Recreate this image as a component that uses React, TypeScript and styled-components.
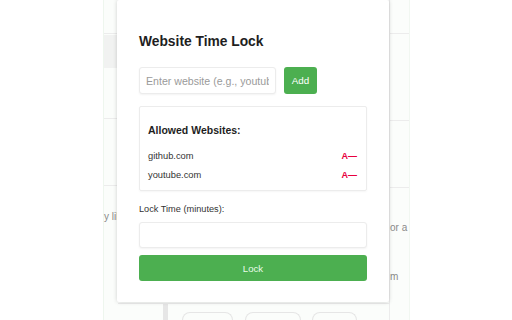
import React from "react";
import styled, { createGlobalStyle } from "styled-components";

const Global = createGlobalStyle`
  html, body { margin: 0; padding: 0; background: #ffffff; }
  body { font-family: "Liberation Sans", Arial, sans-serif; }
  * { box-sizing: border-box; }
`;

const Stage = styled.div`
  position: relative;
  width: 512px;
  height: 320px;
  overflow: hidden;
  display: flex;
  background: #ffffff;
`;

const Gutter = styled.div`
  width: 103px;
  flex: none;
`;

const BgPage = styled.div`
  width: 307px;
  flex: none;
  display: flex;
  background: #fbfdfb;
  border-left: 1px solid #eef6ee;
  border-right: 1px solid #f1f7f1;
`;

const SideStrip = styled.div<{ $w: number; $right?: boolean }>`
  width: ${(p) => p.$w}px;
  flex: none;
  display: flex;
  flex-direction: column;
  ${(p) => (p.$right ? "border-left: 1px solid #ececec;" : "")}
`;

const Segment = styled.div<{ $h: number; $line?: boolean }>`
  height: ${(p) => p.$h}px;
  flex: none;
  ${(p) => (p.$line ? "border-bottom: 1px solid #ececec;" : "")}
`;

const GrayBlock = styled.div`
  height: 33px;
  flex: none;
  background: #f1f2f1;
`;

const Fragment = styled.div<{ $h: number }>`
  height: ${(p) => p.$h}px;
  flex: none;
  display: flex;
  align-items: center;
  font-size: 10px;
  color: #8a8a8a;
  white-space: nowrap;
`;

const Middle = styled.div`
  flex: 1;
  display: flex;
  flex-direction: column;
`;

const BottomRow = styled.div`
  margin-top: 303px;
  height: 17px;
  border-top: 1px solid #ececec;
  display: flex;
  align-items: flex-end;
  padding-left: 45px;
  gap: 10px;
`;

const VBar = styled.div`
  width: 5px;
  align-self: stretch;
  background: #e6e6e6;
  margin-right: 4px;
`;

const Pill = styled.div<{ $w: number; $gap?: number }>`
  width: ${(p) => p.$w}px;
  height: 8px;
  margin-left: ${(p) => p.$gap || 0}px;
  border: 1px solid #e6e6e6;
  border-bottom: none;
  border-radius: 8px 8px 0 0;
`;

const Card = styled.div`
  position: absolute;
  left: 117px;
  top: 0;
  width: 272px;
  height: 302px;
  background: #ffffff;
  border-radius: 2px;
  box-shadow: 0 0 4px rgba(0, 0, 0, 0.18);
  padding: 34px 22px 0 22px;
  display: flex;
  flex-direction: column;
  color: #222;
`;

const Title = styled.h1`
  margin: 0;
  font-size: 13.8px;
  line-height: 16px;
  font-weight: 700;
  color: #1e1e1e;
`;

const AddRow = styled.div`
  margin-top: 17px;
  display: flex;
  gap: 8px;
  height: 27px;
`;

const TextInput = styled.input<{ $w?: number }>`
  width: ${(p) => (p.$w ? `${p.$w}px` : "100%")};
  height: 100%;
  border: 1px solid #ececec;
  border-radius: 3px;
  padding: 0 6px;
  font-family: "Liberation Sans", Arial, sans-serif;
  font-size: 10.6px;
  color: #333;
  background: #fff;
  box-shadow: 0 1px 2px rgba(0, 0, 0, 0.05);
  outline: none;
  &::placeholder { color: #9a9a9a; }
`;

const GreenButton = styled.button<{ $full?: boolean }>`
  height: ${(p) => (p.$full ? 26 : 27)}px;
  width: ${(p) => (p.$full ? "100%" : "33px")};
  border: none;
  border-radius: 3px;
  background: #4caf50;
  color: ${(p) => (p.$full ? "#e9fce9" : "#ffffff")};
  font-family: "Liberation Sans", Arial, sans-serif;
  font-size: ${(p) => (p.$full ? 9.6 : 9.8)}px;
  padding: 0;
  flex: none;
`;

const ListBox = styled.div`
  margin-top: 12px;
  height: 85px;
  border: 1px solid #ececec;
  border-radius: 2px;
  box-shadow: 0 1px 2px rgba(0, 0, 0, 0.04);
  padding: 0 9px 0 8px;
  display: flex;
  flex-direction: column;
`;

const ListHeading = styled.div`
  margin-top: 16.5px;
  font-size: 10.5px;
  line-height: 13px;
  font-weight: 700;
  color: #1e1e1e;
`;

const Items = styled.div`
  margin-top: 10px;
  display: flex;
  flex-direction: column;
`;

const Item = styled.div`
  height: 19px;
  display: flex;
  align-items: center;
  justify-content: space-between;
  font-size: 9.3px;
  color: #333;
`;

const Remove = styled.span`
  color: #e8003d;
  font-size: 9px;
  font-weight: 700;
  display: inline-flex;
  align-items: center;
  gap: 1px;
`;

const Label = styled.div`
  margin-top: 12px;
  font-size: 9.2px;
  line-height: 12px;
  color: #333;
`;

const FieldWrap = styled.div`
  margin-top: 7px;
  height: 26px;
`;

const LockWrap = styled.div`
  margin-top: 7px;
`;

export default function App() {
  return (
    <>
      <Global />
      <Stage>
        <Gutter />
        <BgPage>
          <SideStrip $w={14}>
            <Segment $h={34} $line />
            <Segment $h={1} />
            <GrayBlock />
            <Segment $h={51} $line />
            <Segment $h={67} $line />
            <Segment $h={21} />
            <Fragment $h={18}>y like the</Fragment>
          </SideStrip>
          <Middle>
            <BottomRow>
              <VBar />
              <Pill $w={51} />
              <Pill $w={56} $gap={2} />
              <Pill $w={45} $gap={1} />
            </BottomRow>
          </Middle>
          <SideStrip $w={20} $right>
            <Segment $h={34} $line />
            <Segment $h={87} $line />
            <Segment $h={67} $line />
            <Segment $h={30} />
            <Fragment $h={18}>or a</Fragment>
            <Segment $h={31} />
            <Fragment $h={18}>m</Fragment>
          </SideStrip>
        </BgPage>
        <Card>
          <Title>Website Time Lock</Title>
          <AddRow>
            <TextInput $w={137} placeholder="Enter website (e.g., youtube.com)" />
            <GreenButton>Add</GreenButton>
          </AddRow>
          <ListBox>
            <ListHeading>Allowed Websites:</ListHeading>
            <Items>
              <Item>
                <span>github.com</span>
                <Remove>A—</Remove>
              </Item>
              <Item>
                <span>youtube.com</span>
                <Remove>A—</Remove>
              </Item>
            </Items>
          </ListBox>
          <Label>Lock Time (minutes):</Label>
          <FieldWrap>
            <TextInput />
          </FieldWrap>
          <LockWrap>
            <GreenButton $full>Lock</GreenButton>
          </LockWrap>
        </Card>
      </Stage>
    </>
  );
}
